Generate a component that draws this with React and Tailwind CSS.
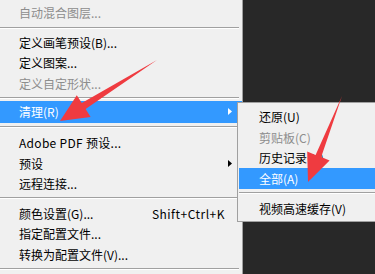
import { Fragment } from 'react'

const font = { fontFamily: '"Noto Sans CJK SC", "Microsoft YaHei", sans-serif' }

const mainItems = [
  { label: '自动混合图层...', disabled: true, h: 'h-[21px]' },
  { sep: true, h: 'h-[9px]' },
  { label: '定义画笔预设(B)...', h: 'h-[21px]' },
  { label: '定义图案...', h: 'h-[21px]' },
  { label: '定义自定形状...', disabled: true, h: 'h-[21px]' },
  { sep: true, h: 'h-[7px]' },
  { label: '清理(R)', active: true, sub: true, h: 'h-[22px]' },
  { sep: true, h: 'h-[10px]' },
  { label: 'Adobe PDF 预设...', h: 'h-[21px]', wide: true },
  { label: '预设', sub: true, h: 'h-[21px]' },
  { label: '远程连接...', h: 'h-[21px]' },
  { sep: true, h: 'h-[9px]' },
  { label: '颜色设置(G)...', shortcut: 'Shift+Ctrl+K', h: 'h-[21px]' },
  { label: '指定配置文件...', h: 'h-[21px]' },
  { label: '转换为配置文件(V)...', h: 'h-[21px]' },
  { sep: true, h: 'h-[9px]' },
]

const subItems = [
  { label: '还原(U)', h: 'h-[21px]' },
  { label: '剪贴板(C)', disabled: true, h: 'h-[21px]' },
  { label: '历史记录(H)', h: 'h-[20px]' },
  { label: '全部(A)', active: true, h: 'h-[21px]' },
  { sep: true, h: 'h-[9px]' },
  { label: '视频高速缓存(V)', h: 'h-[21px]' },
]

function Separator({ h }) {
  return (
    <div className={`${h} pt-[3px]`}>
      <div className="h-px bg-[#a0a0a0]" />
      <div className="h-px bg-white" />
    </div>
  )
}

function Caret({ white }) {
  return (
    <svg width="4" height="7" viewBox="0 0 4 7">
      <polygon points="0,0 4,3.5 0,7" fill={white ? '#ffffff' : '#000000'} />
    </svg>
  )
}

function MenuRow({ item, pl }) {
  const color = item.active ? 'bg-[#3399ff] text-white' : item.disabled ? 'text-[#8d8d8d]' : 'text-black'
  return (
    <div className={`${item.h} ${color} ${pl} flex items-center pr-[10px] text-[12px] leading-none`}>
      <span className={`flex-1 whitespace-nowrap ${item.wide ? 'tracking-[0.3px]' : ''}`}>{item.label}</span>
      {item.shortcut && <span className="mr-[7px] whitespace-nowrap tracking-[0.5px]">{item.shortcut}</span>}
      {item.sub && <Caret white={item.active} />}
    </div>
  )
}

export default function App() {
  return (
    <div className="relative flex h-[274px] w-[375px] overflow-hidden bg-[#282828]" style={font}>
      <div className="flex w-[243px] shrink-0 flex-col border-r border-[#a0a0a0] bg-[#f0f0f0] pt-[3px]">
        {mainItems.map((it, i) => (
          <Fragment key={i}>
            {it.sep ? (
              <div className="pr-[3px]"><Separator h={it.h} /></div>
            ) : (
              <MenuRow item={it} pl="pl-[19px]" />
            )}
          </Fragment>
        ))}
      </div>
      <div className="flex-1" />

      {/* submenu */}
      <div className="absolute left-[237px] top-[102px] w-[150px] border border-[#a0a0a0] bg-[#f0f0f0] pt-[3px] pb-[2px] pl-px">
        {subItems.map((it, i) => (
          <Fragment key={i}>
            {it.sep ? <Separator h={it.h} /> : <MenuRow item={it} pl="pl-[20px]" />}
          </Fragment>
        ))}
      </div>

      {/* red arrows */}
      <svg className="pointer-events-none absolute left-0 top-0" width="375" height="274" viewBox="0 0 375 274">
        <polygon
          points="157,60 81.8,103.1 76.8,95.2 60,121 90.6,117 85.6,109.1"
          fill="#ef3b40"
        />
        <polygon
          points="342,96 315.6,154.9 307.2,151.5 308,182 329.6,160.5 321.2,157.1"
          fill="#ef3b40"
        />
      </svg>
    </div>
  )
}
